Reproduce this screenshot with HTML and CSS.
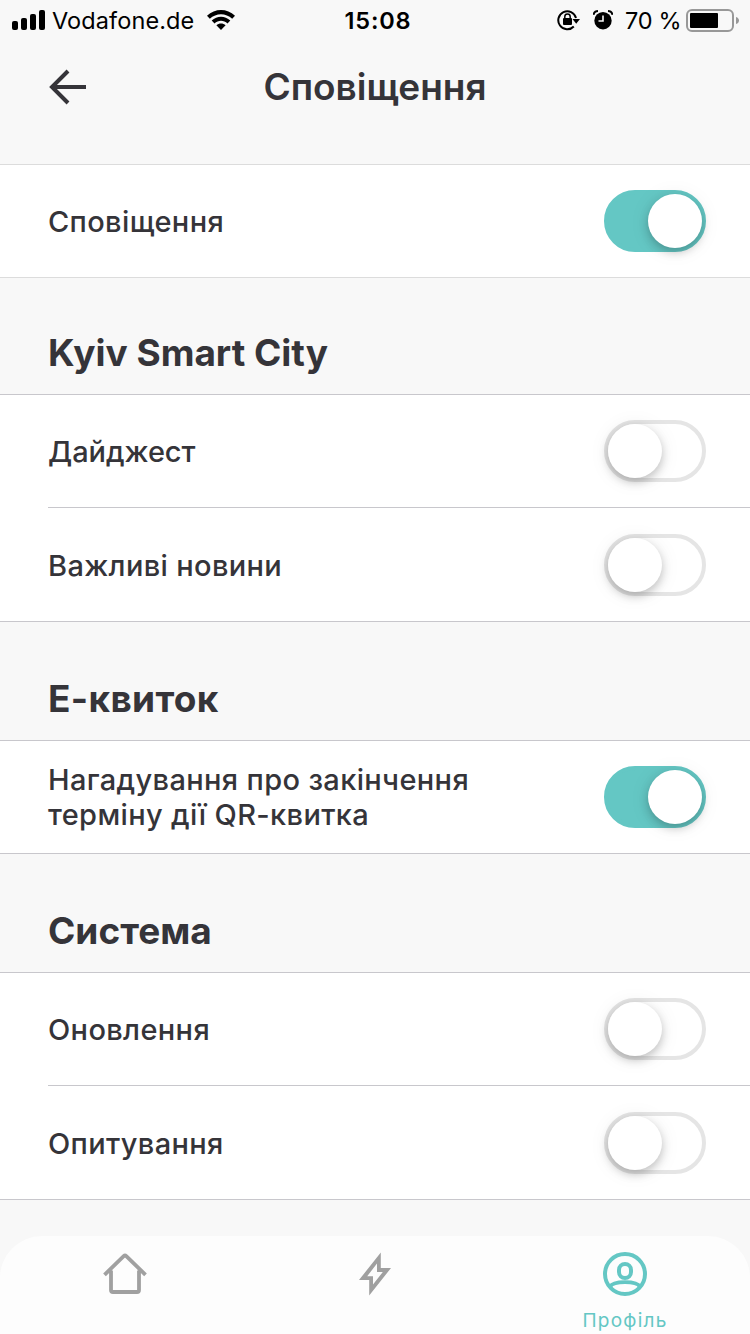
FILE: index.html
```html
<!DOCTYPE html>
<html lang="uk">
<head>
<meta charset="utf-8">
<title>Сповіщення</title>
<link rel="stylesheet" href="styles.css">
</head>
<body>
<div class="screen">
  <div class="status">
    <div class="status-left">
      <svg class="signal" width="34" height="20" viewBox="0 0 34 20"><rect x="0" y="11" width="6" height="9" rx="2"/><rect x="9" y="8" width="6" height="12" rx="2"/><rect x="18" y="4" width="6" height="16" rx="2"/><rect x="27" y="0" width="6" height="20" rx="2"/></svg>
      <span class="carrier">Vodafone.de</span>
      <svg class="wifi" width="28" height="20" viewBox="0 0 28 20"><path d="M0 5.8C8-1.9 20-1.9 28 5.8L25.2 8.7C18.8 2.6 9.2 2.6 2.8 8.7Z"/><path d="M4.7 10.6C10 5.5 18 5.5 23.3 10.6L20.5 13.4C16.8 9.9 11.2 9.9 7.5 13.4Z"/><path d="M9.4 15.3C12 12.8 16 12.8 18.6 15.3L14 20Z"/></svg>
    </div>
    <span class="clock">15:08</span>
    <div class="status-right">
      <svg class="lock" width="24" height="22" viewBox="0 0 24 22"><path d="M16.8 17.5A9 9 0 1 1 19 9" fill="none" stroke="#000" stroke-width="2"/><path d="M15.5 10H23l-3.8 4.7Z"/><rect x="6" y="9" width="9" height="7" rx="1"/><path d="M7.8 10V7.7a2.7 2.7 0 0 1 5.4 0V10" fill="none" stroke="#000" stroke-width="1.5"/></svg>
      <svg class="alarm" width="20" height="20" viewBox="0 0 20 20"><circle cx="10" cy="10.7" r="8.7"/><path d="M.5 4.8 Q1.2 1.2 5 1M19.5 4.8Q18.8 1.2 15 1" fill="none" stroke="#000" stroke-width="2"/><path d="M10 5.4V11H5.5" fill="none" stroke="#f8f8f8" stroke-width="1.6"/></svg>
      <span class="percent">70 %</span>
      <svg class="battery" width="54" height="24" viewBox="0 0 54 24"><rect x="1" y="1" width="46" height="21" rx="5" fill="none" stroke="#989898" stroke-width="2"/><rect x="4" y="4" width="28" height="15" rx="1"/><path d="M50 8c4 1 4 6 0 7Z" fill="#989898"/></svg>
    </div>
  </div>
  <header class="topbar">
    <svg class="back" width="40" height="36" viewBox="0 0 40 36"><path d="M38 18H4M20 2 4 18 20 34" fill="none" stroke="#353439" stroke-width="4"/></svg>
    <h1 class="title">Сповіщення</h1>
  </header>
  <main>
    <section class="group group-main">
      <div class="row"><span class="label">Сповіщення</span><span class="toggle on"><span class="knob"></span></span></div>
    </section>
    <h2 class="heading first">Kyiv Smart City</h2>
    <section class="group">
      <div class="row"><span class="label label-digest">Дайджест</span><span class="toggle"><span class="knob"></span></span></div>
      <div class="divider"></div>
      <div class="row tall"><span class="label">Важливі новини</span><span class="toggle"><span class="knob"></span></span></div>
    </section>
    <h2 class="heading heading-ticket">Е-квиток</h2>
    <section class="group">
      <div class="row"><span class="label">Нагадування про закінчення<br>терміну дії QR-квитка</span><span class="toggle on"><span class="knob"></span></span></div>
    </section>
    <h2 class="heading">Система</h2>
    <section class="group">
      <div class="row"><span class="label">Оновлення</span><span class="toggle"><span class="knob"></span></span></div>
      <div class="divider"></div>
      <div class="row tall"><span class="label">Опитування</span><span class="toggle"><span class="knob"></span></span></div>
    </section>
  </main>
  <nav class="tabs">
    <div class="tab"><svg width="44" height="44" viewBox="0 0 44 44"><path d="M1.5 22.8 20.7 4.2Q22 3 23.3 4.2L42.5 22.8M8 18.5V38Q8 40 10 40H34Q36 40 36 38V18.5" fill="none" stroke="#a0a0a0" stroke-width="3.8"/></svg></div>
    <div class="tab"><svg width="44" height="44" viewBox="0 0 44 44"><path fill="#a0a0a0" fill-rule="evenodd" d="M27.8 .5V16H38L16.2 43.5V28H6ZM24 11.5 14.2 24.2H20V32.5L29.8 20H24Z"/></svg></div>
    <div class="tab active"><svg width="44" height="44" viewBox="0 0 44 44" fill="none" stroke="#64c7c4" stroke-width="4"><circle cx="22" cy="22" r="20"/><rect x="16" y="12" width="12" height="14" rx="6"/><path d="M7 35C10 28.5 34 28.5 37 35" stroke-width="3.8"/></svg><span class="tab-label">Профіль</span></div>
  </nav>
</div>
</body>
</html>
```
FILE: styles.css
```css
* { box-sizing: border-box; }
body { margin: 0; font-family: Inter, "Liberation Sans", sans-serif; color: #353439; background: #f8f8f8; }
svg { display: block; flex: none; }
h1, h2 { margin: 0; }
.screen { width: 750px; height: 1334px; display: flex; flex-direction: column; overflow: hidden; }
.status { height: 40px; flex: none; display: grid; grid-template-columns: 1fr auto 1fr; align-items: center; padding: 1px 10px 0 12px; color: #000; line-height: 39px; white-space: nowrap; }
.status-left, .status-right { display: flex; align-items: center; }
.signal, .wifi, .alarm, .lock { margin-bottom: 1px; }
.status-right { justify-content: flex-end; }
.carrier { margin-left: 6px; font-size: 23.5px; letter-spacing: .1px; width: 155px; }
.clock { font-size: 23.5px; font-weight: 600; letter-spacing: .8px; padding-left: 4px; }
.alarm { margin-left: 12px; }
.percent { margin-left: 12px; width: 61px; font-size: 23.5px; letter-spacing: -.3px; }
.topbar { height: 125px; flex: none; display: grid; grid-template-columns: 1fr auto 1fr; align-items: start; border-bottom: 1px solid #dcdcdc; }
.back { margin: 29px 0 0 48px; }
.title { font-size: 37px; font-weight: 600; line-height: 44px; margin-top: 25px; }
.group { background: #fff; border-bottom: 1px solid #c8c7cc; }
.group-main { border-color: #dcdcdc; }
.row { height: 112px; padding: 0 44px 0 48px; display: flex; justify-content: space-between; align-items: center; }
.tall { height: 113px; }
.tall .label { padding-top: 1px; }
.label { font-size: 29px; line-height: 35px; font-weight: 450; letter-spacing: .35px; white-space: nowrap; }
.label-digest { letter-spacing: -.05px; }
.divider { height: 1px; margin-left: 48px; background: #c8c7cc; }
.heading { height: 119px; padding: 54px 48px 0; font-size: 37px; line-height: 46px; font-weight: 700; border-bottom: 1px solid #c8c7cc; white-space: nowrap; }
.heading-ticket { letter-spacing: .35px; }
.first { height: 117px; padding-top: 52px; }
.toggle { width: 102px; height: 62px; flex: none; border: 4px solid #e5e5e5; border-radius: 31px; display: flex; }
.knob { width: 54px; height: 54px; border-radius: 50%; background: #fff; box-shadow: 0 4px 10px rgba(0,0,0,.22), 0 2px 22px rgba(0,0,0,.07); }
.on { background: #64c7c4; border-color: #64c7c4; justify-content: flex-end; }
.tabs { flex: none; height: 98px; margin-top: 36px; background: #fdfdfd; border-radius: 42px 42px 0 0; display: grid; grid-template-columns: repeat(3, 1fr); }
.tab { display: flex; flex-direction: column; align-items: center; padding-top: 16px; }
.tab-label { margin-top: 13px; font-size: 19px; line-height: 24px; letter-spacing: 1.25px; color: #64c7c4; }
```
